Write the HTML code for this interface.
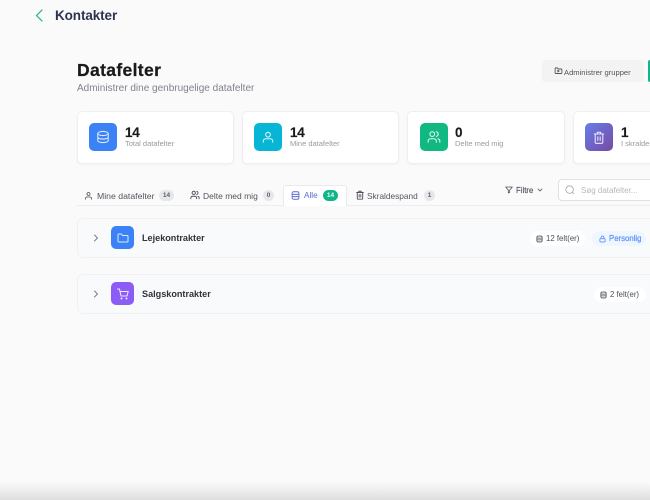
<!DOCTYPE html>
<html lang="da">
<head>
<meta charset="utf-8">
<title>Datafelter</title>
<style>
html,body{margin:0;padding:0;width:650px;height:500px;overflow:hidden;background:#fafafa;font-family:"Liberation Sans",sans-serif;}
#p{position:relative;width:650px;height:500px;overflow:hidden;background:#fafafa;filter:blur(.3px);}
#p>*{position:absolute;}
.t{white-space:nowrap;line-height:1;}
.card{background:#fff;border:1px solid #efeff1;border-radius:5px;box-shadow:0 1px 2px rgba(0,0,0,.04);box-sizing:border-box;top:111px;height:53px;}
.ic{top:123px;width:28px;height:28px;border-radius:5px;display:flex;align-items:center;justify-content:center;}
.ic svg{display:block;}
svg{fill:none;stroke-linecap:round;stroke-linejoin:round;}
.num{top:126px;font-size:13.5px;font-weight:bold;color:#1a1a1a;letter-spacing:-.2px;-webkit-text-stroke:.15px #1a1a1a;}
.lbl{top:140px;font-size:7.5px;color:#979aa3;}
.tab{top:192px;font-size:8.7px;color:#52565e;}
.bdg{top:190px;height:11px;border-radius:6px;background:#e5e7eb;color:#5b6068;font-size:6.5px;font-weight:bold;display:flex;align-items:center;justify-content:center;}
.row{left:77px;width:590px;height:40px;background:#f9fafb;border:1px solid #f0f1f2;border-radius:6px;box-sizing:border-box;}
.name{font-size:9.1px;font-weight:bold;color:#30343a;}
.pill{height:15px;border-radius:8px;background:#fff;display:flex;align-items:center;font-size:7.8px;color:#4b5058;white-space:nowrap;}
</style>
</head>
<body>
<div id="p">
<svg style="left:33px;top:9px" width="12" height="13" viewBox="0 0 12 13"><path d="M9 1 3.500 6.500 9 12" stroke="#10b68a" stroke-width="1.200"/></svg>
<div class="t" style="left:55px;top:9px;font-size:13.5px;font-weight:bold;color:#2b3350;letter-spacing:-.1px">Kontakter</div>

<div class="t" style="left:77px;top:62px;font-size:17.5px;font-weight:bold;color:#1a1a1a;letter-spacing:.35px;-webkit-text-stroke:.25px #1a1a1a">Datafelter</div>
<div class="t" style="left:77px;top:84px;font-size:10px;color:#7f838c">Administrer dine genbrugelige datafelter</div>

<div style="left:542px;top:60px;width:102px;height:22px;background:#f3f3f4;border-radius:3px"></div>
<svg style="left:554px;top:66px" width="9" height="9" viewBox="0 0 24 24"><path d="M3 7a2 2 0 0 1 2-2h4l2 3h8a2 2 0 0 1 2 2v8a2 2 0 0 1-2 2H5a2 2 0 0 1-2-2z" stroke="#555" stroke-width="2.400"/><path d="M10 11l4 2.500-4 2.500z" stroke="#555" stroke-width="2"/></svg>
<div class="t" style="left:564px;top:69px;font-size:7.6px;color:#50545b">Administrer grupper</div>
<div style="left:648px;top:60px;width:8px;height:22px;background:#10b68a;border-radius:2px"></div>

<div class="card" style="left:77px;width:157px"></div>
<div class="card" style="left:242px;width:157px"></div>
<div class="card" style="left:407px;width:158px"></div>
<div class="card" style="left:573px;width:100px"></div>

<div class="ic" style="left:89px;background:#3b82f6"><svg width="14" height="14" viewBox="0 0 24 24" stroke="#dbeafe" stroke-width="1.800"><ellipse cx="12" cy="6" rx="9" ry="3.500"/><path d="M3 6v12c0 2 4 3.500 9 3.500s9-1.500 9-3.500V6M3 12c0 2 4 3.500 9 3.500s9-1.500 9-3.500"/></svg></div>
<div class="ic" style="left:254px;background:#06b6d4"><svg width="14" height="14" viewBox="0 0 24 24" stroke="#e0f7fa" stroke-width="1.800"><circle cx="12" cy="8" r="4"/><path d="M4 21v-2a4 4 0 0 1 4-4h8a4 4 0 0 1 4 4v2"/></svg></div>
<div class="ic" style="left:420px;background:#10b981"><svg width="14" height="14" viewBox="0 0 24 24" stroke="#e3fbf1" stroke-width="1.800"><circle cx="9" cy="7" r="4"/><path d="M2 21v-2a4 4 0 0 1 4-4h6a4 4 0 0 1 4 4v2M16 3.100a4 4 0 0 1 0 7.800M22 21v-2a4 4 0 0 0-3-3.900"/></svg></div>
<div class="ic" style="left:585px;background:linear-gradient(135deg,#667eea,#764ba2)"><svg width="14" height="15" viewBox="0 0 24 24" stroke="#efeaff" stroke-width="1.800"><path d="M4 6h16M9 6V3h6v3M5.500 6v14a2 2 0 0 0 2 2h9a2 2 0 0 0 2-2V6M10 11v6M14 11v6"/></svg></div>

<div class="t num" style="left:125px">14</div><div class="t lbl" style="left:125px">Total datafelter</div>
<div class="t num" style="left:290px">14</div><div class="t lbl" style="left:290px">Mine datafelter</div>
<div class="t num" style="left:455px">0</div><div class="t lbl" style="left:455px">Delte med mig</div>
<div class="t num" style="left:621px">1</div><div class="t lbl" style="left:621px">I skraldespand</div>

<div style="left:77px;top:205px;width:573px;height:1px;background:#eceded"></div>
<div style="left:283px;top:185px;width:64px;height:21px;background:#fff;border:1px solid #e9eaec;border-bottom:0;border-radius:3px 3px 0 0;box-sizing:border-box"></div>

<svg style="left:84px;top:191px" width="9" height="9" viewBox="0 0 24 24" stroke="#4f535b" stroke-width="2.200"><circle cx="12" cy="8" r="4"/><path d="M4 22v-2a4 4 0 0 1 4-4h8a4 4 0 0 1 4 4v2"/></svg>
<div class="t tab" style="left:97px">Mine datafelter</div>
<div class="bdg" style="left:159px;width:15px">14</div>

<svg style="left:190px;top:190px" width="10" height="10" viewBox="0 0 24 24" stroke="#4f535b" stroke-width="2.200"><circle cx="9" cy="7" r="4"/><path d="M2 21v-2a4 4 0 0 1 4-4h6a4 4 0 0 1 4 4v2M16 3.100a4 4 0 0 1 0 7.800M22 21v-2a4 4 0 0 0-3-3.900"/></svg>
<div class="t tab" style="left:203px;font-size:8.5px">Delte med mig</div>
<div class="bdg" style="left:263px;width:11px">0</div>

<svg style="left:291px;top:191px" width="9" height="9" viewBox="0 0 24 24" stroke="#5e6ad2" stroke-width="2.400"><rect x="3" y="2" width="18" height="20" rx="4"/><path d="M3 9h18M3 15h18"/></svg>
<div class="t tab" style="left:304px;color:#5e6ad2;font-size:8.2px">Alle</div>
<div class="bdg" style="left:323px;width:15px;background:#10b68a;color:#e8fff7">14</div>

<svg style="left:355px;top:190px" width="10" height="10" viewBox="0 0 24 24" stroke="#4f535b" stroke-width="2.200"><path d="M4 6h16M9 6V3h6v3M5.500 6v14a2 2 0 0 0 2 2h9a2 2 0 0 0 2-2V6M10 11v6M14 11v6"/></svg>
<div class="t tab" style="left:367px;font-size:8.3px">Skraldespand</div>
<div class="bdg" style="left:424px;width:11px">1</div>

<svg style="left:505px;top:186px" width="8" height="8" viewBox="0 0 24 24" stroke="#4f535b" stroke-width="2.400"><path d="M2 3h20l-8 9.500V19l-4 2v-8.500z"/></svg>
<div class="t" style="left:516px;top:187px;font-size:7.8px;color:#555a62;-webkit-text-stroke:.15px #555a62">Filtre</div>
<svg style="left:537px;top:188px" width="6" height="5" viewBox="0 0 6 5"><path d="M1 1l2 2 2-2" stroke="#6b7078" stroke-width=".9"/></svg>

<div style="left:558px;top:179px;width:110px;height:22px;background:#fff;border:1px solid #dfe1e5;border-radius:4px;box-sizing:border-box"></div>
<svg style="left:565px;top:185px" width="10" height="10" viewBox="0 0 24 24" stroke="#a2a6ad" stroke-width="2"><circle cx="11" cy="11" r="9"/><path d="M21 21l-3.500-3.500"/></svg>
<div class="t" style="left:581px;top:187px;font-size:8px;color:#b5b8be">Søg datafelter...</div>

<div class="row" style="top:218px"></div>
<div class="row" style="top:274px"></div>

<svg style="left:93px;top:234px" width="6" height="8" viewBox="0 0 6 8"><path d="M1.500 1l3 3-3 3" stroke="#7a7e86"/></svg>
<svg style="left:93px;top:290px" width="6" height="8" viewBox="0 0 6 8"><path d="M1.500 1l3 3-3 3" stroke="#7a7e86"/></svg>

<div class="ic" style="left:111px;top:226px;width:23px;height:23px;background:#3b82f6"><svg width="12" height="12" viewBox="0 0 24 24" stroke="#dbeafe" stroke-width="2"><path d="M2 6a2 2 0 0 1 2-2h5l2 3h9a2 2 0 0 1 2 2v9a2 2 0 0 1-2 2H4a2 2 0 0 1-2-2z"/></svg></div>
<div class="ic" style="left:111px;top:282px;width:23px;height:23px;background:#8b5cf6"><svg width="12" height="12" viewBox="0 0 24 24" stroke="#f1eaff" stroke-width="2"><circle cx="9" cy="21" r="1"/><circle cx="19" cy="21" r="1"/><path d="M1 2h4l3 14h12l2.500-9H6"/></svg></div>

<div class="t name" style="left:142px;top:234px">Lejekontrakter</div>
<div class="t name" style="left:142px;top:290px">Salgskontrakter</div>

<div class="pill" style="left:530px;top:231px;width:55px"><svg style="margin:0 3px 0 6px" width="7" height="8" viewBox="0 0 24 24" stroke="#4b5058" stroke-width="2.800"><rect x="3" y="2" width="18" height="20" rx="4"/><path d="M3 9h18M3 15h18"/></svg>12 felt(er)</div>
<div class="pill" style="left:592px;top:231px;width:54px;background:#eff6ff;color:#5b94f5;-webkit-text-stroke:.2px #5b94f5"><svg style="margin:0 3px 0 7px" width="7" height="8" viewBox="0 0 24 24" stroke="#5b94f5" stroke-width="2.800"><rect x="3" y="11" width="18" height="11" rx="2"/><path d="M7 11V7a5 5 0 0 1 10 0v4"/></svg>Personlig</div>
<div class="pill" style="left:594px;top:287px;width:52px"><svg style="margin:0 3px 0 6px" width="7" height="8" viewBox="0 0 24 24" stroke="#4b5058" stroke-width="2.800"><rect x="3" y="2" width="18" height="20" rx="4"/><path d="M3 9h18M3 15h18"/></svg>2 felt(er)</div>

<div style="left:0;top:482px;width:650px;height:18px;background:linear-gradient(to bottom,rgba(222,222,222,0),#dedede)"></div>
</div>
</body>
</html>
